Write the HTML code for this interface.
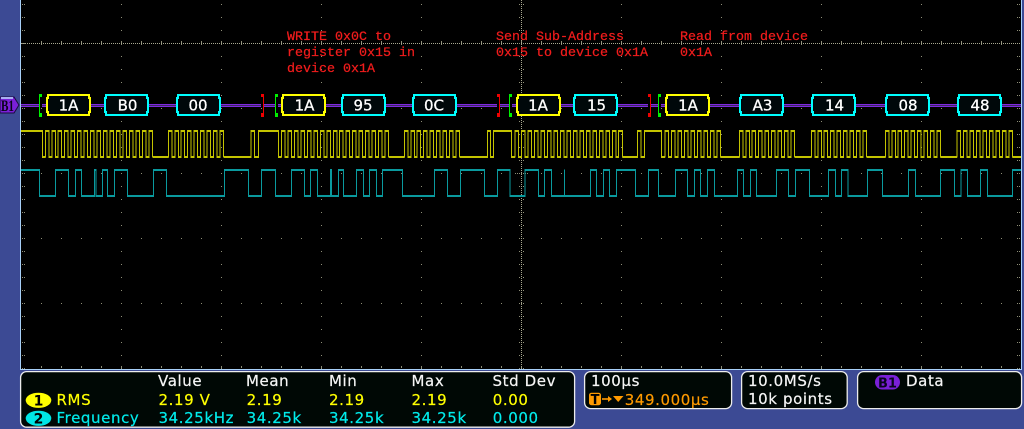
<!DOCTYPE html>
<html><head><meta charset="utf-8">
<style>
html,body{margin:0;padding:0;background:#3c4a94;}
svg{display:block;}
.r{font-family:"Liberation Mono",monospace;font-size:13.33px;fill:#f01c1c;stroke:#f01c1c;stroke-width:.25px;}
.b{font-family:"DejaVu Sans",sans-serif;font-size:15px;fill:#fff;stroke:#fff;stroke-width:.3px;text-anchor:middle;}
.t{font-family:"DejaVu Sans",sans-serif;font-size:15px;letter-spacing:.6px;stroke-width:.2px;}
.w{fill:#f6f6f6;stroke:#f6f6f6;}.y{fill:#ffff00;stroke:#ffff00;}.c{fill:#00ecec;stroke:#00ecec;}.o{fill:#ff9a00;stroke:#ff9a00;}
</style></head><body>
<svg width="1024" height="429" viewBox="0 0 1024 429" xmlns="http://www.w3.org/2000/svg">
<defs>
<path id="g9" d="M0 156.5v-26h3.5v26h2.97v-26h3.5v26h2.97v-26h3.5v26h2.97v-26h3.5v26h2.97v-26h3.5v26h2.97v-26h3.5v26h2.97v-26h3.5v26h2.97v-26h3.5v26h2.97v-26h3.6v26"/>
<path id="g17" d="M0 156.5v-26h3.5v26h2.97v-26h3.5v26h2.97v-26h3.5v26h2.97v-26h3.5v26h2.97v-26h3.5v26h2.97v-26h3.5v26h2.97v-26h3.5v26h2.97v-26h3.5v26h2.97v-26h3.5v26h2.97v-26h3.5v26h2.97v-26h3.5v26h2.97v-26h3.5v26h2.97v-26h3.5v26h2.97v-26h3.5v26h2.97v-26h3.5v26h2.97v-26h3.5v26h2.97v-26h3.6v26"/>
<path id="bx" d="M1 95H42V98H43V112H42V115H1V112H0V98H1Z"/>
<g id="yt">
<path d="M21 130.5H42.7V156.5H45.3M153 156.5H168.3M224 156.5H251V130.5H254.5V156.5H258.3V130.5H278.3V156.5H281.3M389 156.5H404.3M460 156.5H487.3V130.5H490.7V156.5H493.7V130.5H511.7V156.5H515M622.7 156.5H637.7V130.5H641V156.5H644.3V130.5H661.7V156.5H665M720.7 156.5H739.3M795 156.5H811.3M867 156.5H885.3M940.7 156.5H957M1012.7 156.5H1021"/>
<use href="#g17" x="45.3"/><use href="#g9" x="168.3"/>
<use href="#g17" x="281.5"/><use href="#g9" x="404.3"/>
<use href="#g17" x="515.2"/>
<use href="#g9" x="665"/><use href="#g9" x="739.3"/><use href="#g9" x="811.3"/><use href="#g9" x="885.3"/><use href="#g9" x="957"/>
</g>
<path id="ct" d="M21 169.5H39.3V195.5H55.3V169.5H68.3V195.5H75.3V169.5H81.3V195.5H94.7V169.5H95.8V195.5H102.3V169.5H107.3V195.5H114.3V169.5H127.3V195.5H153.7V169.5H166.3V195.5H224.3V169.5H248.7V195.5H261.3V169.5H275.3V195.5H291.3V169.5H304.3V195.5H310.7V169.5H317.3V195.5H330.3V169.5H331.4V195.5H338.3V169.5H343.3V195.5H356.3V169.5H363.3V195.5H369.3V169.5H376.3V195.5H382.3V169.5H402.3V195.5H434.3V169.5H447.3V195.5H460.3V169.5H484.3V195.5H497.3V169.5H510V195.5H525V169.5H538.3V195.5H544.3V169.5H551.3V195.5H564.3V169.5V195.5H590.3V169.5H596.7V195.5H603.3V169.5H609.3V195.5H616.3V169.5H635.3V195.5H648.3V169.5H658.3V195.5H675.3V169.5H687.3V195.5H694.3V169.5H700.7V195.5H707.3V169.5H714.3V195.5H737.3V169.5H743.7V195.5H750.3V169.5H756.3V195.5H776.3V169.5H788.7V195.5H795.3V169.5H809.3V195.5H828.7V169.5H835.3V195.5H841.7V169.5H848V195.5H867.3V169.5H882.3V195.5H908.3V169.5H915.3V195.5H940.3V169.5H954.3V195.5H961V169.5H967.3V195.5H980.3V169.5H987.3V195.5H1012.3V169.5H1021"/>
</defs>
<rect width="1024" height="429" fill="#3c4a94"/>
<rect x="20" y="0" width="1002" height="370" fill="#a8d0f8"/>
<rect x="21" y="0" width="1000" height="369" fill="#000"/>

<!-- graticule -->
<g fill="none" stroke="#8f8f78" stroke-width="1" shape-rendering="crispEdges">
<path stroke-dasharray="1 12" d="M121.5 4V369M221.5 4V369M321.5 4V369M421.5 4V369M621.5 4V369M721.5 4V369M821.5 4V369M921.5 4V369M22.5 4V369M24.5 4V369M1017.5 4V369M1019.5 4V369"/>
<path stroke-dasharray="1 19" d="M41 108.5H1021M41 173.5H1021M41 238.5H1021M41 303.5H1021M41 366.5H1021M41 367.5H1021"/>
<path stroke-dasharray="1 19" d="M41 41.5H1021M41 42.5H1021M41 44.5H1021"/>
<path stroke-dasharray="1 1" stroke="#a8a890" d="M21 43.5H1021M521.5 0V369"/>
<path stroke-dasharray="1 12" d="M519.5 4V369M523.5 4V369"/>
<path stroke-dasharray="1 1" d="M515 173.5H528"/>
</g>

<!-- annotation text -->
<text class="r" x="287" y="40">WRITE 0x0C to</text>
<text class="r" x="287" y="56">register 0x15 in</text>
<text class="r" x="287" y="72">device 0x1A</text>
<text class="r" x="496" y="40">Send Sub-Address</text>
<text class="r" x="496" y="56">0x15 to device 0x1A</text>
<text class="r" x="680" y="40">Read from device</text>
<text class="r" x="680" y="56">0x1A</text>

<!-- bus lines -->
<rect x="21" y="104" width="1000" height="1" fill="#8028e0"/>
<rect x="21" y="105" width="1000" height="1" fill="#3a2a66"/>
<rect x="21" y="106" width="1000" height="1" fill="#8028e0"/>

<!-- brackets -->
<g shape-rendering="crispEdges">
<g fill="#000">
<rect x="39" y="103" width="3" height="5"/><rect x="261" y="103" width="3" height="5"/>
<rect x="275" y="103" width="3" height="5"/><rect x="497" y="103" width="3" height="5"/>
<rect x="509" y="103" width="3" height="5"/><rect x="648" y="103" width="3" height="5"/>
<rect x="658" y="103" width="3" height="5"/>
</g>
<g fill="none" stroke-width="1">
<path stroke="#00f000" stroke-width="3" d="M40.5 94V97M40.5 113V117M276.5 94V97M276.5 113V117M510.5 94V97M510.5 113V117M659.5 94V97M659.5 113V117"/>
<path stroke="#00f000" d="M39.5 94V117M275.5 94V117M509.5 94V117M658.5 94V117"/>
<path stroke="#f00000" stroke-width="3" d="M262.5 94V97M262.5 113V117M498.5 94V97M498.5 113V117M649.5 94V97M649.5 113V117"/>
<path stroke="#f00000" d="M263.5 94V117M499.5 94V117M650.5 94V117"/>
</g>
</g>

<!-- decode boxes -->
<g fill="#00080a" stroke-width="2" shape-rendering="crispEdges">
<use href="#bx" x="47" stroke="#ffff00"/>
<use href="#bx" x="105" stroke="#00ffff"/>
<use href="#bx" x="177" stroke="#00ffff"/>
<use href="#bx" x="282" stroke="#ffff00"/>
<use href="#bx" x="342" stroke="#00ffff"/>
<use href="#bx" x="413" stroke="#00ffff"/>
<use href="#bx" x="517" stroke="#ffff00"/>
<use href="#bx" x="574" stroke="#00ffff"/>
<use href="#bx" x="666" stroke="#ffff00"/>
<use href="#bx" x="740" stroke="#00ffff"/>
<use href="#bx" x="812" stroke="#00ffff"/>
<use href="#bx" x="886" stroke="#00ffff"/>
<use href="#bx" x="958" stroke="#00ffff"/>
</g>
<g>
<text class="b" x="68.5" y="110.5">1A</text>
<text class="b" x="127.5" y="110.5">B0</text>
<text class="b" x="198" y="110.5">00</text>
<text class="b" x="304.5" y="110.5">1A</text>
<text class="b" x="363" y="110.5">95</text>
<text class="b" x="434" y="110.5">0C</text>
<text class="b" x="538" y="110.5">1A</text>
<text class="b" x="596.5" y="110.5">15</text>
<text class="b" x="688" y="110.5">1A</text>
<text class="b" x="762.5" y="110.5">A3</text>
<text class="b" x="834.5" y="110.5">14</text>
<text class="b" x="908" y="110.5">08</text>
<text class="b" x="980" y="110.5">48</text>
</g>

<!-- yellow trace -->
<g fill="none" stroke="#c4c400" stroke-width="1" shape-rendering="crispEdges">
<use href="#yt"/>
<use href="#yt" y="1"/>
</g>

<!-- cyan trace -->
<g fill="none" stroke="#0a9a9e" stroke-width="1" shape-rendering="crispEdges">
<use href="#ct"/>
<use href="#ct" y="1"/>
</g>

<!-- B1 marker -->
<path d="M0 97H14L19 105L14 113H0Z" fill="#7a20d8" stroke="#1a0a40" stroke-width="1"/>
<rect x="1" y="97" width="12" height="2" fill="#a8b0f0"/>
<text x="1" y="111" font-family="Liberation Serif,serif" font-weight="bold" font-size="16" fill="#08041a" textLength="13" lengthAdjust="spacingAndGlyphs">B1</text>

<!-- bottom panels -->
<g fill="#000805" stroke="#ececec" stroke-width="1.3">
<rect x="20.6" y="371.6" width="554" height="55.6" rx="6"/>
<rect x="584.6" y="371.6" width="147" height="37" rx="6"/>
<rect x="741.6" y="371.6" width="105.6" height="37" rx="6"/>
<rect x="857.6" y="371.6" width="164" height="37" rx="6"/>
</g>

<g>
<text class="t w" x="158" y="386">Value</text>
<text class="t w" x="246" y="386">Mean</text>
<text class="t w" x="329" y="386">Min</text>
<text class="t w" x="411.5" y="386">Max</text>
<text class="t w" x="492.5" y="386">Std Dev</text>

<ellipse cx="38.5" cy="400.3" rx="12.8" ry="7.6" fill="#ffff00"/>
<text x="38.5" y="405.5" font-family="DejaVu Sans,sans-serif" font-weight="bold" font-size="14" fill="#000" text-anchor="middle">1</text>
<text class="t y" x="56.5" y="405">RMS</text>
<text class="t y" x="158.5" y="405">2.19 V</text>
<text class="t y" x="246.6" y="405">2.19</text>
<text class="t y" x="329" y="405">2.19</text>
<text class="t y" x="411.5" y="405">2.19</text>
<text class="t y" x="492.7" y="405">0.00</text>

<ellipse cx="38.5" cy="418.3" rx="12.8" ry="7.6" fill="#00e6e6"/>
<text x="38.5" y="423.5" font-family="DejaVu Sans,sans-serif" font-weight="bold" font-size="14" fill="#000" text-anchor="middle">2</text>
<text class="t c" x="56.5" y="423">Frequency</text>
<text class="t c" x="158.5" y="423">34.25kHz</text>
<text class="t c" x="246.6" y="423">34.25k</text>
<text class="t c" x="329" y="423">34.25k</text>
<text class="t c" x="411.5" y="423">34.25k</text>
<text class="t c" x="492.7" y="423">0.000</text>

<text class="t w" x="591" y="386">100µs</text>
<rect x="589" y="392.7" width="12" height="12.5" rx="2.5" fill="#ff9a00"/>
<text x="595" y="404" font-family="DejaVu Sans,sans-serif" font-weight="bold" font-size="13" fill="#000" text-anchor="middle">T</text>
<path d="M602 399H610" stroke="#ff9a00" stroke-width="1.6" fill="none"/>
<path d="M608 396L612 399L608 402Z" fill="#ff9a00"/>
<path d="M613 396H623.5L618.2 402Z" fill="#ff9a00"/>
<text class="t o" x="624.7" y="405">349.000µs</text>

<text class="t w" x="748" y="386">10.0MS/s</text>
<text class="t w" x="748" y="404">10k points</text>

<rect x="875" y="375" width="25" height="14.5" rx="7.2" fill="#7a20d8"/>
<text x="887.5" y="387.3" font-family="DejaVu Sans,sans-serif" font-weight="bold" font-size="13" fill="#0a0520" text-anchor="middle">B1</text>
<text class="t w" x="906" y="386">Data</text>
</g>
</svg>
</body></html>
